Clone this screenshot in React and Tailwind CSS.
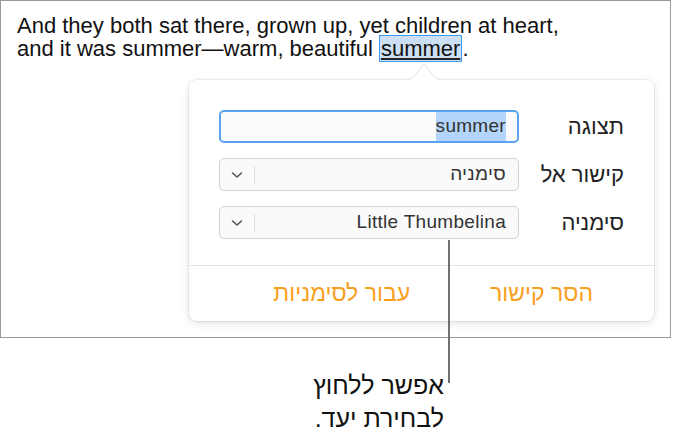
import React from "react";

const Select = ({ value }) => (
  <div className="flex h-[33px] w-[300px] items-center rounded-[5px] border border-[#d3d3d3] bg-[#fafafa]">
    <div className="flex w-[34px] items-center justify-center">
      <svg width="12" height="8" viewBox="0 0 12 8">
        <path d="M1.5 2 L6 6 L10.5 2" fill="none" stroke="#555" strokeWidth="1.6" strokeLinecap="round" strokeLinejoin="round" />
      </svg>
    </div>
    <div className="h-[18px] w-px bg-[#dcdcdc]" />
    <div dir="rtl" className="flex-1 pr-[12px] text-right text-[19px] tracking-[0.3px] text-[#333]">
      {value}
    </div>
  </div>
);

const Row = ({ label, children }) => (
  <div className="flex items-center">
    {children}
    <div dir="rtl" className="flex-1 text-right text-[22px] text-[#222]">
      {label}
    </div>
  </div>
);

export default function App() {
  return (
    <div className="relative h-[435px] w-[673px] bg-white font-['Liberation_Sans',sans-serif]">
      <div className="relative h-[338px] w-[671px] border border-[#9a9a9a]">
        <p className="pl-[16px] pt-[13px] text-[22px] leading-[23px] text-[#111]">
          And they both sat there, grown up, yet children at heart,
          <br />
          and it was summer—warm, beautiful{" "}
          <span className="border border-[#3a9af5] bg-[#cddff2] px-[1px] underline decoration-[#222]">summer</span>.
        </p>

        {/* popover */}
        <div className="absolute left-[188px] top-[79px] w-[465px] rounded-[8px] bg-white shadow-[0_0_0_1px_rgba(0,0,0,0.05),0_2px_8px_rgba(0,0,0,0.12)]">
          <svg className="absolute left-[214px] top-[-18px]" width="42" height="19" viewBox="0 0 42 19">
            <path d="M0 18.5 C8 18.5 10 16 14 11 L21 1.5 L28 11 C32 16 34 18.5 42 18.5" fill="white" stroke="#e3e3e3" strokeWidth="1" />
            <rect x="0" y="18" width="42" height="2" fill="white" />
          </svg>

          <div className="flex flex-col gap-[15px] px-[30px] pb-[26px] pt-[30px]">
            <Row label="תצוגה">
              <div className="flex h-[33px] w-[300px] items-center justify-end rounded-[5px] border-2 border-[#5aa3f3] bg-[#fbfbfb] pr-[11px]">
                <span className="bg-[#b4d5fb] text-[19px] tracking-[0.3px] text-[#333]">summer</span>
              </div>
            </Row>
            <Row label="קישור אל">
              <Select value="סימניה" />
            </Row>
            <Row label="סימניה">
              <Select value="Little Thumbelina" />
            </Row>
          </div>

          <div dir="rtl" className="flex h-[56px] items-center gap-[80px] border-t border-[#e4e4e4] pr-[61px] text-[23px] text-[#f7a020]">
            <span>הסר קישור</span>
            <span>עבור לסימניות</span>
          </div>
        </div>
      </div>

      {/* callout */}
      <div className="absolute left-[448px] top-[240px] h-[143px] w-[2px] bg-[#707070]" />
      <div dir="rtl" className="w-[444px] pt-[31px] text-right text-[25px] leading-[33px] text-[#111]">
        אפשר ללחוץ
        <br />
        לבחירת יעד.
      </div>
    </div>
  );
}
